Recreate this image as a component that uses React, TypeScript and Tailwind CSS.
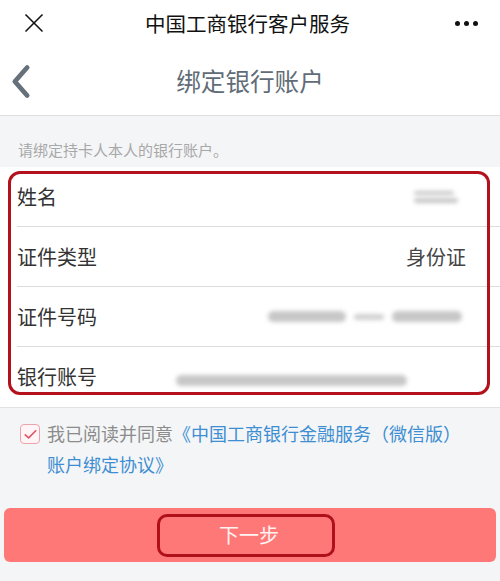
import { X } from "lucide-react";

function Row({
  label,
  children,
  last,
}: {
  label: string;
  children?: React.ReactNode;
  last?: boolean;
}) {
  return (
    <div className="flex h-[60px] pl-[17px]">
      <div
        className={`flex flex-1 items-center pr-[34px] ${
          last ? "" : "border-b border-[#dcdcdc]"
        }`}
      >
        <span className="text-[20px] text-[#333]">{label}</span>
        <div className="flex flex-1 items-center justify-end">{children}</div>
      </div>
    </div>
  );
}

function Smudge({ w, h }: { w: string; h: string }) {
  return (
    <div className={`${w} ${h} rounded-full bg-[#b9b9b9] opacity-80 blur-[2px]`} />
  );
}

export default function App() {
  return (
    <div className="h-[581px] w-[500px] overflow-hidden bg-[#f4f5f7] [font-family:'Noto_Sans_CJK_SC',sans-serif]">
      {/* wechat top bar */}
      <div className="flex h-[46px] items-center bg-white pl-[18px] pr-[22px]">
        <X className="h-[32px] w-[32px] text-[#111]" strokeWidth={1.25} />
        <div className="flex-1 pr-[10px] text-center text-[20.5px] text-[#111]">
          中国工商银行客户服务
        </div>
        <div className="flex gap-[4px]">
          <span className="h-[5px] w-[5px] rounded-full bg-[#111]" />
          <span className="h-[5px] w-[5px] rounded-full bg-[#111]" />
          <span className="h-[5px] w-[5px] rounded-full bg-[#111]" />
        </div>
      </div>

      {/* page header */}
      <div className="relative flex h-[69px] items-center justify-center bg-white">
        <svg
          viewBox="0 0 24 40"
          className="absolute left-[10px] top-[18px] h-[35px] w-[22px]"
        >
          <path
            d="M19 4 L5 20 L19 36"
            fill="none"
            stroke="#66717c"
            strokeWidth="5.5"
            strokeLinecap="round"
            strokeLinejoin="round"
          />
        </svg>
        <span className="text-[24.6px] text-[#616c77]">绑定银行账户</span>
      </div>

      {/* hint */}
      <div className="h-[52px] border-t border-[#dedede] pl-[18px] pt-[24px] text-[15px] leading-[20px] text-[#a8a8a8]">
        请绑定持卡人本人的银行账户。
      </div>

      {/* form card */}
      <div className="relative border-b border-[#e2e2e2] bg-white">
        <Row label="姓名">
          <div className="mr-[8px] flex flex-col gap-[3px]">
            <Smudge w="w-[40px]" h="h-[4px]" />
            <Smudge w="w-[44px]" h="h-[5px]" />
          </div>
        </Row>
        <Row label="证件类型">
          <span className="text-[20px] text-[#444]">身份证</span>
        </Row>
        <Row label="证件号码">
          <div className="mr-[4px] flex items-center gap-[8px]">
            <Smudge w="w-[78px]" h="h-[11px]" />
            <div className="h-[6px] w-[30px] rounded-full bg-[#d0d0d0] blur-[2px]" />
            <Smudge w="w-[70px]" h="h-[11px]" />
          </div>
        </Row>
        <Row label="银行账号" last>
          <div className="mr-[59px] mt-[6px]">
            <Smudge w="w-[231px]" h="h-[11px]" />
          </div>
        </Row>
        <div className="pointer-events-none absolute bottom-[12px] left-[8px] right-[10px] top-[4px] rounded-[12px] border-[3px] border-[#b3121c]" />
      </div>

      {/* agreement */}
      <div className="flex pl-[20px] pt-[10px]">
        <div className="mr-[7px] mt-[6px] flex h-[20px] w-[20px] shrink-0 items-center justify-center rounded-[4px] border-[1.5px] border-[#eda3ab] bg-[#fff5f6]">
          <svg viewBox="0 0 20 20" className="h-[15px] w-[15px]">
            <path
              d="M3 10.5l4.5 4L17 5"
              fill="none"
              stroke="#e0566a"
              strokeWidth="2.2"
              strokeLinecap="round"
              strokeLinejoin="round"
            />
          </svg>
        </div>
        <p className="w-[418px] text-[18px] leading-[31px] text-[#8c8c8c]">
          我已阅读并同意
          <span className="text-[#3d8ed2]">
            《中国工商银行金融服务（微信版）账户绑定协议》
          </span>
        </p>
      </div>

      {/* submit */}
      <div className="relative mx-[4px] mt-[28px] flex h-[54px] items-center justify-center rounded-[6px] bg-[#ff7878]">
        <span className="mr-[2px] text-[20px] text-white/90">下一步</span>
        <div className="pointer-events-none absolute left-[153px] top-[6px] h-[43px] w-[178px] rounded-[10px] border-[3px] border-[#b0101a]" />
      </div>
    </div>
  );
}
